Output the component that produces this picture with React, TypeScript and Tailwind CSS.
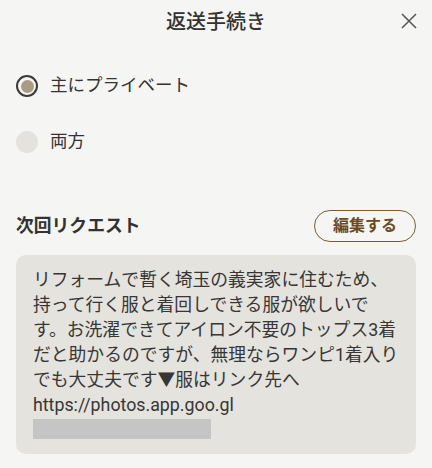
import React from "react";

const lines = [
  "リフォームで暫く埼玉の義実家に住むため、",
  "持って行く服と着回しできる服が欲しいで",
  "す。お洗濯できてアイロン不要のトップス3着",
  "だと助かるのですが、無理ならワンピ1着入り",
  "でも大丈夫です▼服はリンク先へ",
  "https://photos.app.goo.gl",
];

export default function App() {
  return (
    <div
      className="w-[432px] h-[468px] bg-[#f5f5f4] text-[#333333] overflow-hidden"
      style={{ fontFamily: 'Roboto, "Noto Sans CJK JP", "Noto Sans", sans-serif' }}
    >
      <div className="relative h-[44px] flex items-center justify-center">
        <span className="text-[20px] font-medium text-[#333333] leading-none">返送手続き</span>
        <button className="absolute right-[15px] top-[13px] w-[16px] h-[16px] flex items-center justify-center">
          <svg width="16" height="16" viewBox="0 0 16 16" fill="none">
            <path d="M1 1L15 15M15 1L1 15" stroke="#555555" strokeWidth="1.5" />
          </svg>
        </button>
      </div>

      <div className="mt-[20px] px-[16px] flex flex-col gap-[12px]">
        <div className="h-[44px] flex items-center gap-[12px]">
          <div className="w-[22px] h-[22px] rounded-full border-2 border-[#3a3a3a] flex items-center justify-center">
            <div className="w-[13px] h-[13px] rounded-full bg-[#a99c83]" />
          </div>
          <span className="text-[17.5px] leading-none">主にプライベート</span>
        </div>
        <div className="h-[44px] flex items-center gap-[12px]">
          <div className="w-[22px] h-[22px] rounded-full bg-[#e3e2dd]" />
          <span className="text-[17.5px] leading-none">両方</span>
        </div>
      </div>

      <div className="mt-[46px] px-[16px] flex items-center justify-between h-[32px]">
        <span className="text-[17.8px] font-bold leading-none text-[#333333]">次回リクエスト</span>
        <button className="h-[32px] w-[102px] rounded-full border-[1.5px] border-[#7d5d2e] text-[#6b4a1f] text-[16px] font-bold flex items-center justify-center">
          編集する
        </button>
      </div>

      <div className="mt-[13px] mx-[16px] rounded-[10px] bg-[#e4e3de] pt-[12px] pl-[17px] pr-[8px] pb-[15px]">
        {lines.map((l, i) => (
          <div key={i} className="text-[17.8px] leading-[25px] whitespace-nowrap text-[#363636]">
            {l}
          </div>
        ))}
        <div className="mt-[2px] w-[178px] h-[20px] bg-[#c5c5c5]" />
      </div>
    </div>
  );
}
